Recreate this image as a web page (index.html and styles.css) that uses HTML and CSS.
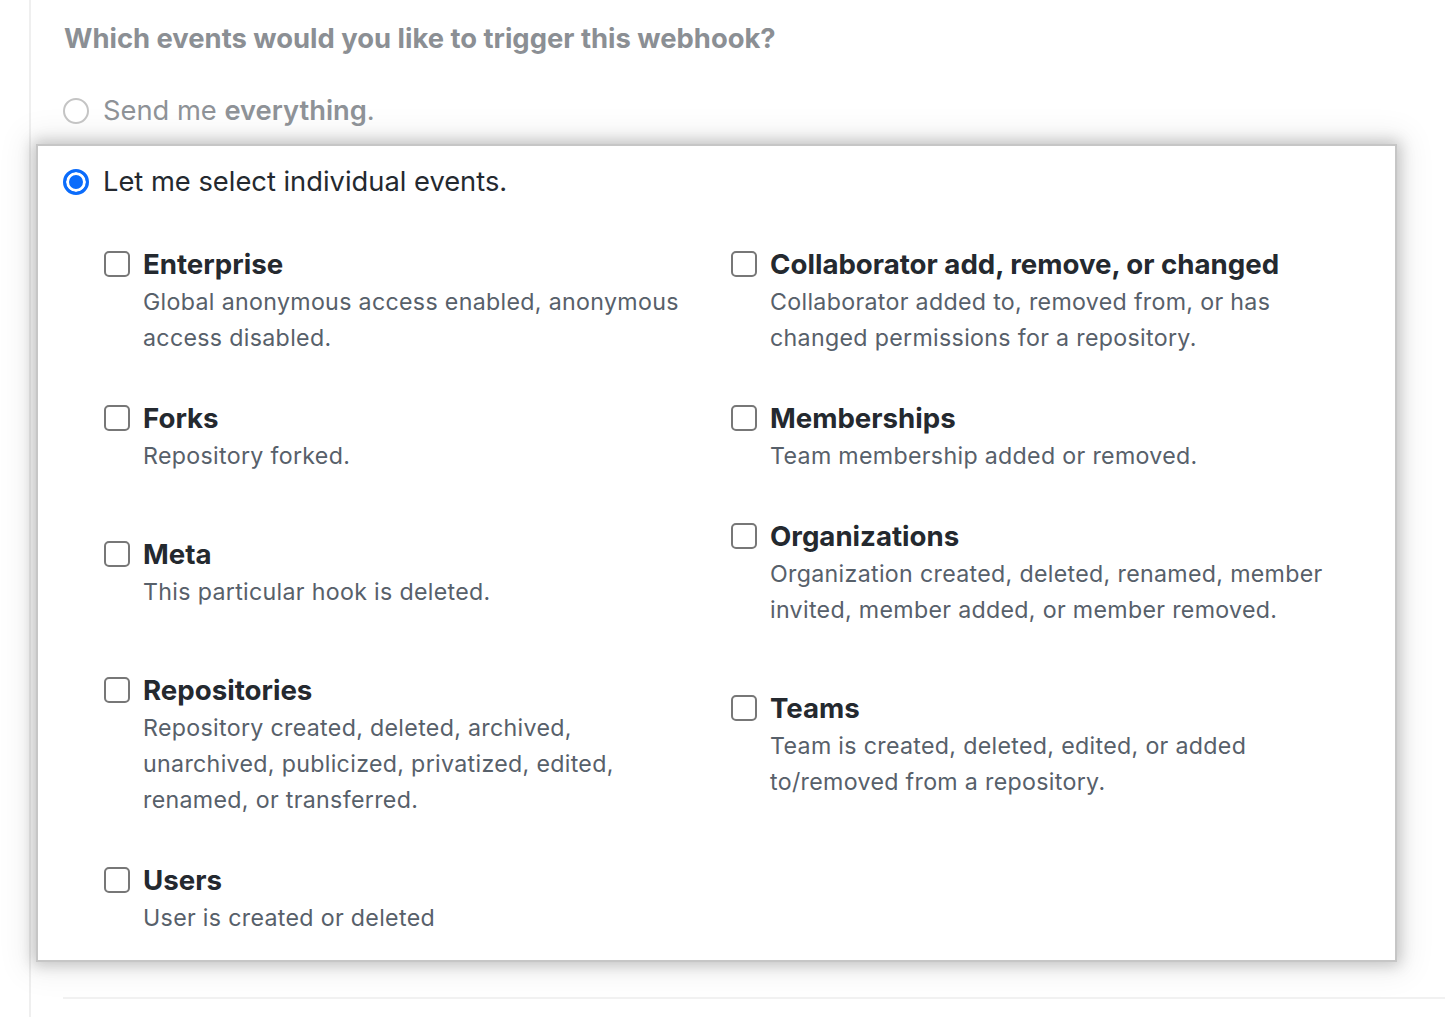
FILE: index.html
```html
<!DOCTYPE html>
<html lang="en">
<head>
<meta charset="utf-8">
<title>Webhook events</title>
<link rel="stylesheet" href="styles.css">
</head>
<body>
<div class="page">
  <h2 class="question">Which events would you like to trigger this webhook?</h2>
  <label class="choice dim">
    <span class="radio"></span>
    <span>Send me <strong>everything</strong>.</span>
  </label>
  <div class="focus-box">
    <label class="choice">
      <span class="radio checked"></span>
      <span>Let me select individual events.</span>
    </label>
    <div class="events">
      <div class="col">
        <div class="event gap-sm">
          <div class="event-title"><span class="checkbox"></span>Enterprise</div>
          <p class="event-desc">Global anonymous access enabled, anonymous access disabled.</p>
        </div>
        <div class="event gap-lg">
          <div class="event-title"><span class="checkbox"></span>Forks</div>
          <p class="event-desc">Repository forked.</p>
        </div>
        <div class="event gap-lg">
          <div class="event-title"><span class="checkbox"></span>Meta</div>
          <p class="event-desc">This particular hook is deleted.</p>
        </div>
        <div class="event gap-sm">
          <div class="event-title"><span class="checkbox"></span>Repositories</div>
          <p class="event-desc">Repository created, deleted, archived, unarchived, publicized, privatized, edited, renamed, or transferred.</p>
        </div>
        <div class="event">
          <div class="event-title"><span class="checkbox"></span>Users</div>
          <p class="event-desc">User is created or deleted</p>
        </div>
      </div>
      <div class="col">
        <div class="event gap-sm">
          <div class="event-title"><span class="checkbox"></span>Collaborator add, remove, or changed</div>
          <p class="event-desc">Collaborator added to, removed from, or has changed permissions for a repository.</p>
        </div>
        <div class="event gap-sm">
          <div class="event-title"><span class="checkbox"></span>Memberships</div>
          <p class="event-desc">Team membership added or removed.</p>
        </div>
        <div class="event gap-lg">
          <div class="event-title"><span class="checkbox"></span>Organizations</div>
          <p class="event-desc">Organization created, deleted, renamed, member invited, member added, or member removed.</p>
        </div>
        <div class="event">
          <div class="event-title"><span class="checkbox"></span>Teams</div>
          <p class="event-desc">Team is created, deleted, edited, or added to/removed from a repository.</p>
        </div>
      </div>
    </div>
  </div>
  <div class="divider"></div>
</div>
</body>
</html>
```
FILE: styles.css
```css
* { box-sizing: border-box; }
html, body { margin: 0; padding: 0; background: #ffffff; }
body {
  font-family: Inter, "Liberation Sans", sans-serif;
  color: #24292f;
  overflow: hidden;
  height: 1017px;
}
.page {
  margin-left: 29px;
  border-left: 2px solid #efefef;
  min-height: 1017px;
  padding-top: 18px;
}
.question {
  margin: 0 0 33px 33px;
  font-size: 27.4px;
  line-height: 40px;
  font-weight: 700;
  color: #8b8f94;
}
.choice {
  display: flex;
  align-items: center;
  gap: 14px;
  font-size: 27.3px;
  line-height: 40px;
  margin-left: 32px;
}
.choice.dim { color: #8e9297; }
.choice.dim strong { font-weight: 600; }
.radio {
  width: 26px;
  height: 26px;
  border-radius: 50%;
  border: 2px solid #c4c4c4;
  flex: none;
  background: #fff;
}
.radio.checked {
  border: 3px solid #0b6cfb;
  box-shadow: inset 0 0 0 3px #fff;
  background: #0b6cfb;
}
.focus-box {
  margin: 13px 48px 0 5px;
  border: 2px solid #c6c6c6;
  background: #fff;
  box-shadow: 0 0 14px 3px rgba(0, 0, 0, 0.2), 0 0 30px 10px rgba(0, 0, 0, 0.07);
  padding: 16px 0 24px 0;
}
.focus-box .choice { margin-left: 25px; }
.events {
  display: grid;
  grid-template-columns: 627px 1fr;
  padding-left: 66px;
  margin-top: 43px;
}
.event { margin: 0; }
.event.gap-sm { margin-bottom: 43px; }
.event.gap-lg { margin-bottom: 61px; }
.event-title {
  display: flex;
  align-items: center;
  gap: 13px;
  font-size: 27.65px;
  line-height: 38px;
  font-weight: 700;
  color: #24292f;
}
.checkbox {
  width: 26px;
  height: 26px;
  border: 2px solid #777777;
  border-radius: 5px;
  flex: none;
  background: #fff;
}
.event-desc {
  margin: 0;
  padding-top: 1px;
  padding-left: 39px;
  font-size: 23.2px;
  letter-spacing: 0.32px;
  line-height: 36px;
  color: #57606a;
  max-width: 600px;
}
.divider {
  margin: 35px 0 0 32px;
  height: 2px;
  background: #f1f1f1;
}
```
